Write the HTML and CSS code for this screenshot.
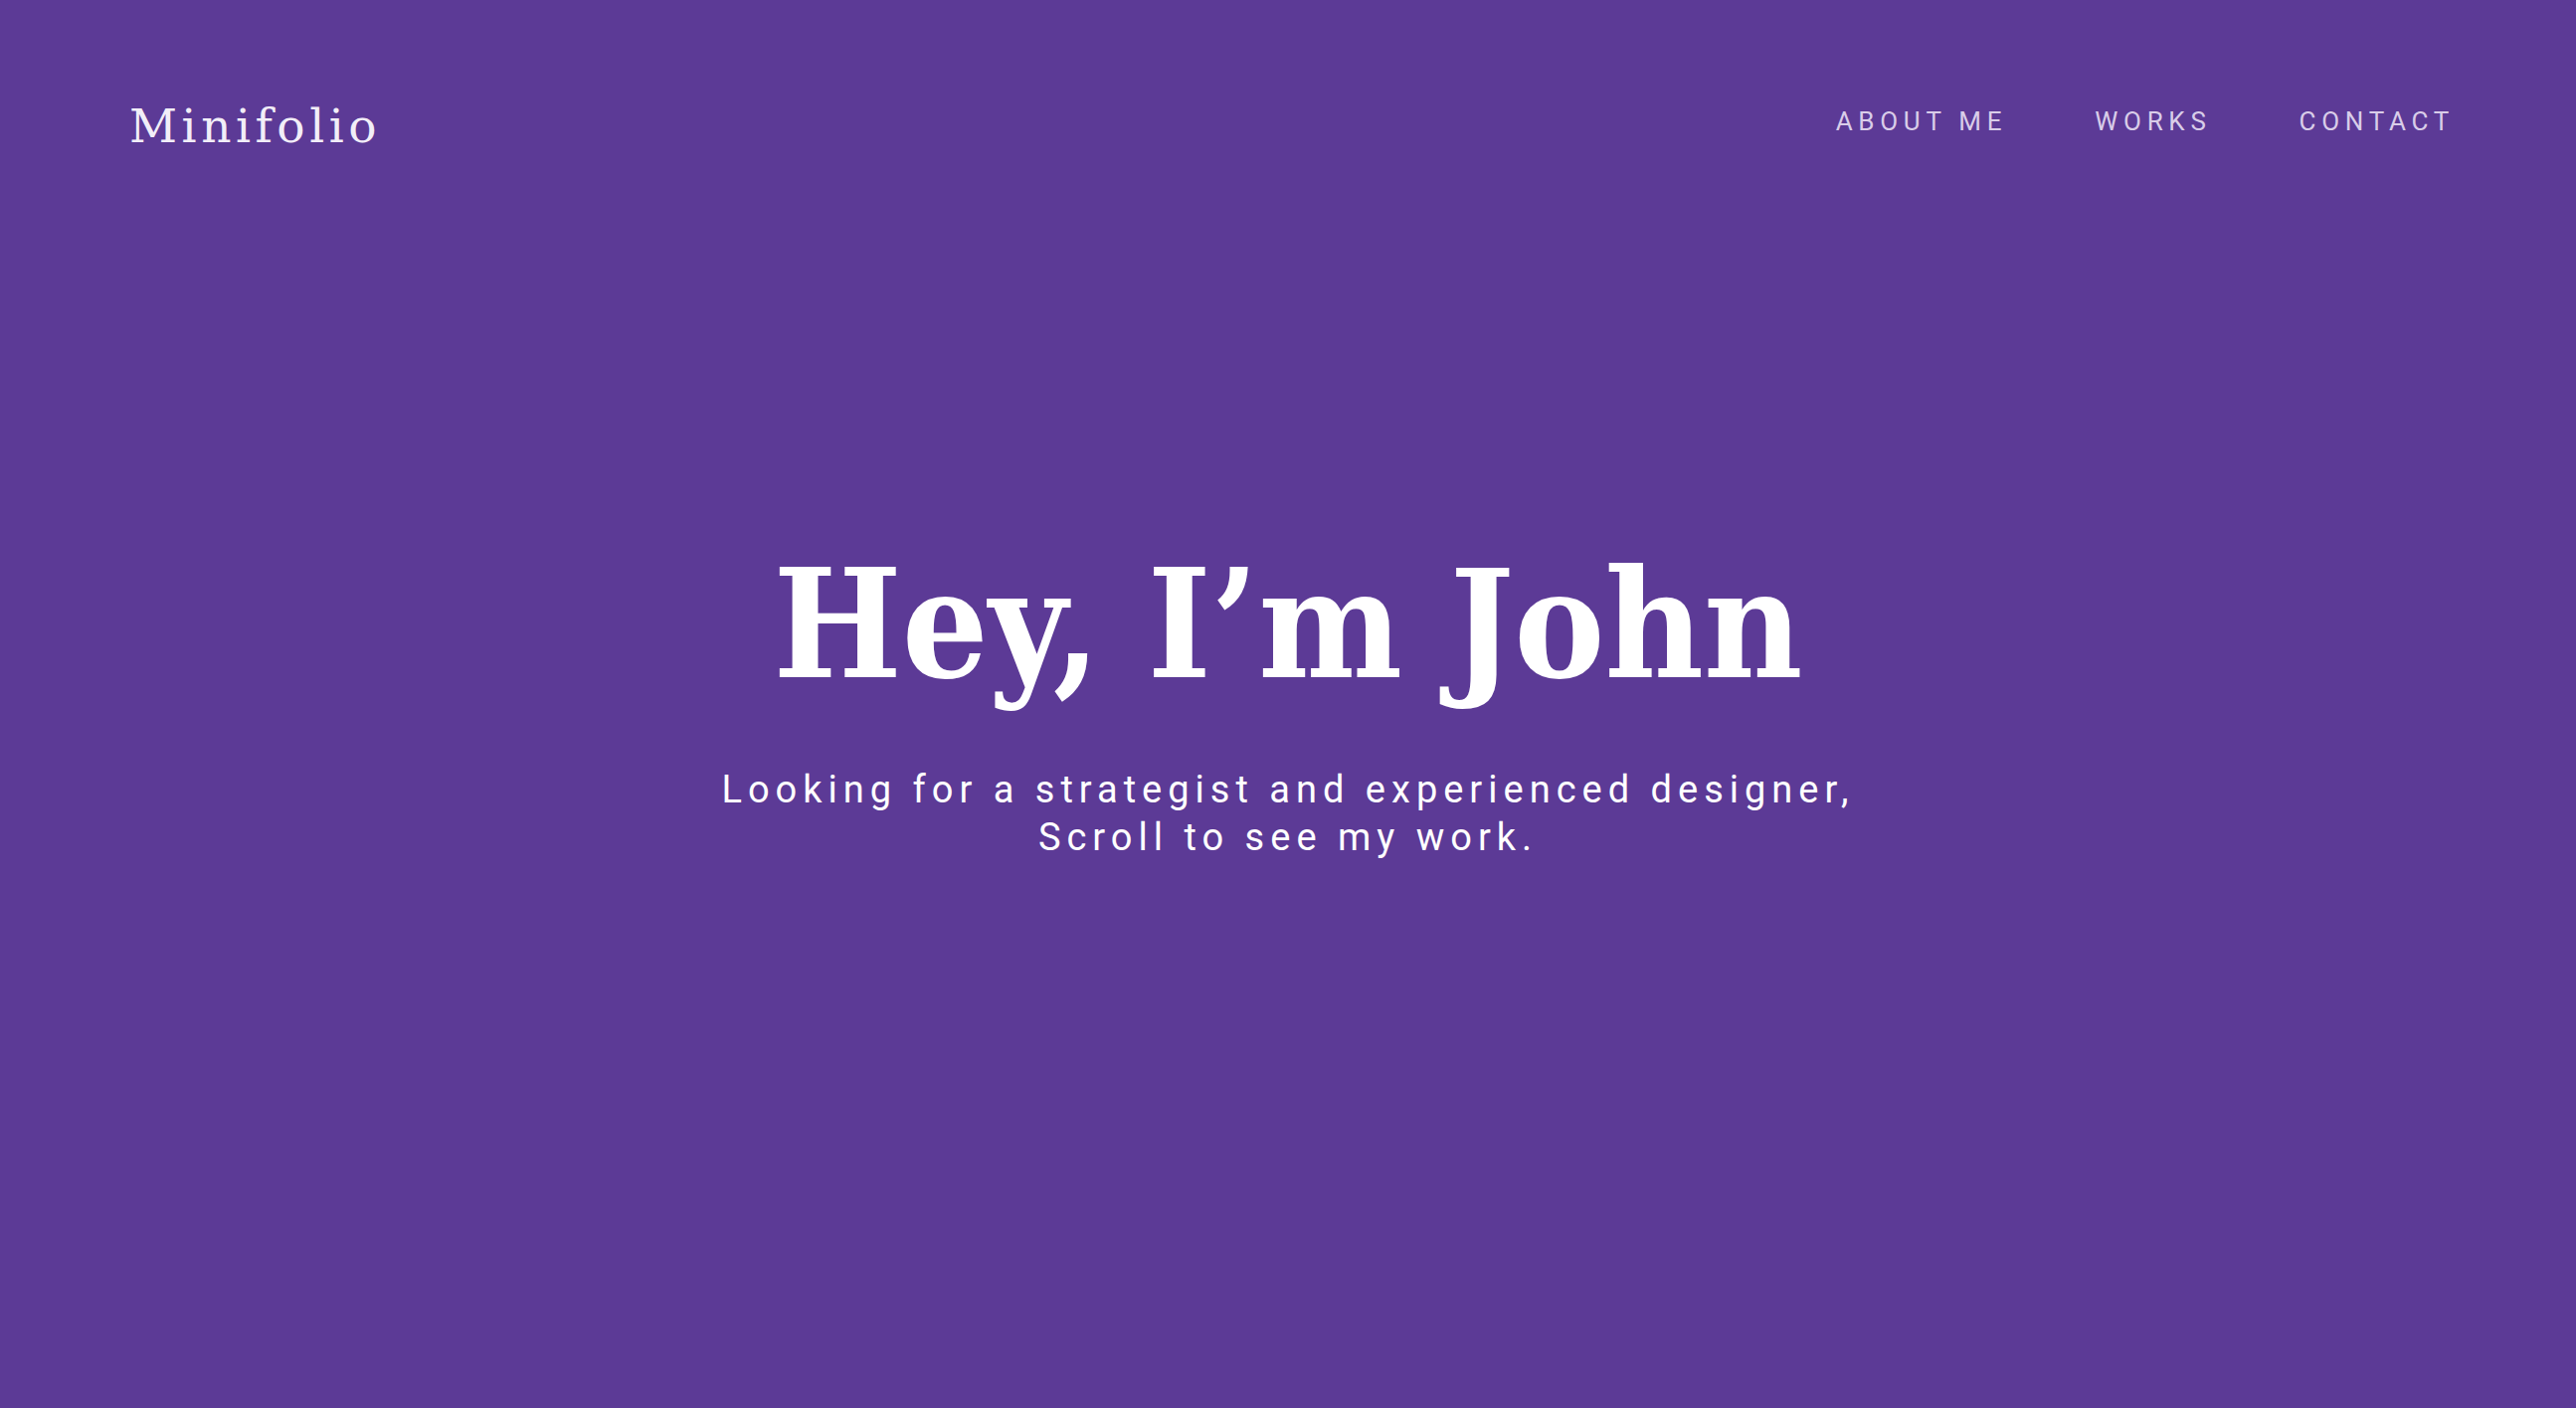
FILE: index.html
```html
<!DOCTYPE html>
<html lang="en">
<head>
<meta charset="utf-8">
<title>Minifolio</title>
<link rel="stylesheet" href="styles.css">
</head>
<body>
<div class="page">
  <header class="site-header">
    <a class="logo" href="#">Minifolio</a>
    <nav class="nav">
      <a href="#">About me</a>
      <a href="#">Works</a>
      <a href="#">Contact</a>
    </nav>
  </header>
  <main class="hero">
    <h1 class="hero-title">Hey, I’m John</h1>
    <p class="hero-text">Looking for a strategist and experienced designer,<br>Scroll to see my work.</p>
  </main>
</div>
</body>
</html>
```

FILE: styles.css
```css
html, body {
  margin: 0;
  padding: 0;
  height: 100%;
}
body {
  background: #5c3a96;
  color: #fff;
  font-family: Roboto, "Noto Sans", sans-serif;
}
.page {
  min-height: 100vh;
  display: flex;
  flex-direction: column;
}
.site-header {
  display: flex;
  justify-content: space-between;
  align-items: center;
  padding: 95px 122px 0 130px;
}
.logo {
  font-family: "DejaVu Serif", "Liberation Serif", serif;
  font-size: 47px;
  font-weight: 400;
  letter-spacing: 4.5px;
  color: #f2eef8;
  text-decoration: none;
  margin-top: 4px;
}
.nav {
  display: flex;
  gap: 88px;
  margin-bottom: 6px;
}
.nav a {
  font-size: 26px;
  text-transform: uppercase;
  letter-spacing: 0.22em;
  color: #d9cde9;
  text-decoration: none;
}
.hero {
  flex: 1;
  display: flex;
  flex-direction: column;
  align-items: center;
  justify-content: center;
  text-align: center;
  padding-bottom: 160px;
}
.hero-title {
  margin: 0;
  font-family: "DejaVu Serif Condensed", "DejaVu Serif", serif;
  font-stretch: condensed;
  font-weight: 700;
  font-size: 152px;
  line-height: 1.1;
}
.hero-text {
  margin: 58px 0 0;
  font-size: 38px;
  line-height: 48px;
  letter-spacing: 0.158em;
}
```
